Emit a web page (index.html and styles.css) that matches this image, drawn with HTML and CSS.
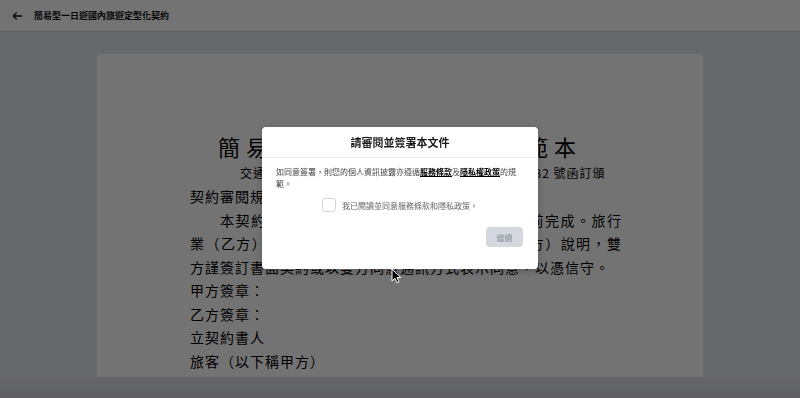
FILE: index.html
```html
<!DOCTYPE html>
<html lang="zh-Hant">
<head>
<meta charset="utf-8">
<title>簡易型一日遊國內旅遊定型化契約</title>
<link rel="stylesheet" href="styles.css">
</head>
<body>
<header class="topbar">
  <button class="back" aria-label="返回">
    <svg width="10" height="8" viewBox="0 0 10 8"><path d="M9.5 4H1.2M4.4 0.9L1.2 4l3.2 3.1" fill="none" stroke="#111" stroke-width="1.3" stroke-linecap="round" stroke-linejoin="round"/></svg>
  </button>
  <h1 class="topbar-title">簡易型一日遊國內旅遊定型化契約</h1>
</header>
<main class="viewer">
  <article class="paper">
    <h2 class="doc-title">簡易型一日遊旅遊契約書範本</h2>
    <p class="doc-note">交通部觀光局民國106年6月1日觀業字第1063005382 號函訂頒</p>
    <p class="doc-line">契約審閱規定：本契約經甲方攜回審閱。</p>
    <p class="doc-para">本契約已經甲方攜回審閱一日以上，並於出發前完成。旅行業（乙方）已將本契約之全部內容逐條向旅客（甲方）說明，雙方謹簽訂書面契約或以雙方同意通訊方式表示同意，以憑信守。</p>
    <p class="doc-line">甲方簽章：</p>
    <p class="doc-line">乙方簽章：</p>
    <p class="doc-line">立契約書人</p>
    <p class="doc-line">旅客（以下稱甲方）</p>
  </article>
</main>
<div class="footer"></div>
<div class="overlay">
  <section class="modal" role="dialog" aria-labelledby="modal-title">
    <div class="modal-head">
      <h3 class="modal-title" id="modal-title">請審閱並簽署本文件</h3>
    </div>
    <div class="modal-body">
      <p class="modal-text">如同意簽署，則您的個人資訊披露亦遵循<a href="#">服務條款</a>及<a href="#">隱私權政策</a>的規範。</p>
      <label class="agree"><span class="checkbox"></span><span>我已閱讀並同意服務條款和隱私政策。</span></label>
      <div class="actions"><button class="btn" disabled>繼續</button></div>
    </div>
  </section>
</div>
<svg class="cursor" width="11" height="16" viewBox="0 0 11 16"><path d="M1 1L1 13L3.9 10.3L6 14.8L8 13.9L5.9 9.5L9.8 9.5Z" fill="#000" stroke="#fff" stroke-width="1" stroke-linejoin="round"/></svg>
</body>
</html>
```
FILE: styles.css
```css
* { box-sizing: border-box; }
html, body { margin: 0; }
body {
  width: 800px;
  height: 398px;
  overflow: hidden;
  background: #e4e6ee;
  font-family: "Noto Sans CJK TC", "Noto Sans", sans-serif;
}
.topbar {
  height: 32px;
  background: #fff;
  border-bottom: 1px solid #d2d2d2;
  display: flex;
  align-items: center;
  gap: 12px;
  padding-left: 12px;
}
.back {
  border: 0;
  background: none;
  padding: 0;
  width: 10px;
  height: 8px;
  display: flex;
}
.topbar-title {
  margin: 0;
  font-size: 9px;
  font-weight: 700;
  color: #111;
}
.viewer {
  height: 345px;
  padding-top: 22px;
}
.paper {
  width: 606px;
  height: 100%;
  margin: 0 auto;
  background: #fff;
  overflow: hidden;
  padding: 77px 81px 0 93px;
  color: #000;
}
.doc-title {
  margin: 0 -81px 0 -93px;
  text-align: center;
  font-size: 22px;
  line-height: 30px;
  font-weight: 400;
  letter-spacing: 6px;
}
.doc-note {
  margin: 0;
  padding-left: 50px;
  font-size: 12px;
  line-height: 24px;
  letter-spacing: 1px;
}
.doc-line, .doc-para {
  margin: 0;
  font-size: 14px;
  line-height: 23.5px;
  letter-spacing: 1px;
  text-align: justify;
}
.doc-para { text-indent: 30px; }
.footer {
  height: 21px;
  background: linear-gradient(#e0e1e7, #d5d6dc);
}
.overlay {
  position: fixed;
  inset: 0;
  background: rgba(0, 0, 0, 0.55);
  display: flex;
  align-items: center;
  justify-content: center;
}
.modal {
  width: 276px;
  background: #fff;
  border-radius: 4px;
  box-shadow: 0 2px 8px rgba(0, 0, 0, 0.2);
  margin-top: -2px;
}
.modal-head {
  height: 31px;
  border-bottom: 1px solid #ebebeb;
  display: flex;
  align-items: center;
  justify-content: center;
}
.modal-title {
  margin: 0;
  font-size: 11px;
  font-weight: 700;
  color: #1a1a1a;
}
.modal-body { padding: 8px 14px 22px; }
.modal-text {
  margin: 0;
  font-size: 8px;
  line-height: 12px;
  color: #444;
}
.modal-text a {
  color: #000;
  font-weight: 700;
  text-decoration: underline;
}
.agree {
  display: flex;
  align-items: center;
  justify-content: center;
  gap: 6px;
  margin-top: 8px;
  font-size: 8px;
  color: #666;
}
.checkbox {
  width: 14px;
  height: 14px;
  border: 1px solid #d6d6d6;
  border-radius: 3px;
  background: #fff;
}
.actions {
  display: flex;
  justify-content: flex-end;
  margin-top: 15px;
  padding-right: 1px;
}
.btn {
  width: 37px;
  height: 20px;
  border: 0;
  border-radius: 4px;
  background: #d5d9df;
  color: #8e939b;
  font-size: 8px;
  font-family: inherit;
  padding: 0;
}
.cursor {
  position: fixed;
  left: 391px;
  top: 268px;
}
```
